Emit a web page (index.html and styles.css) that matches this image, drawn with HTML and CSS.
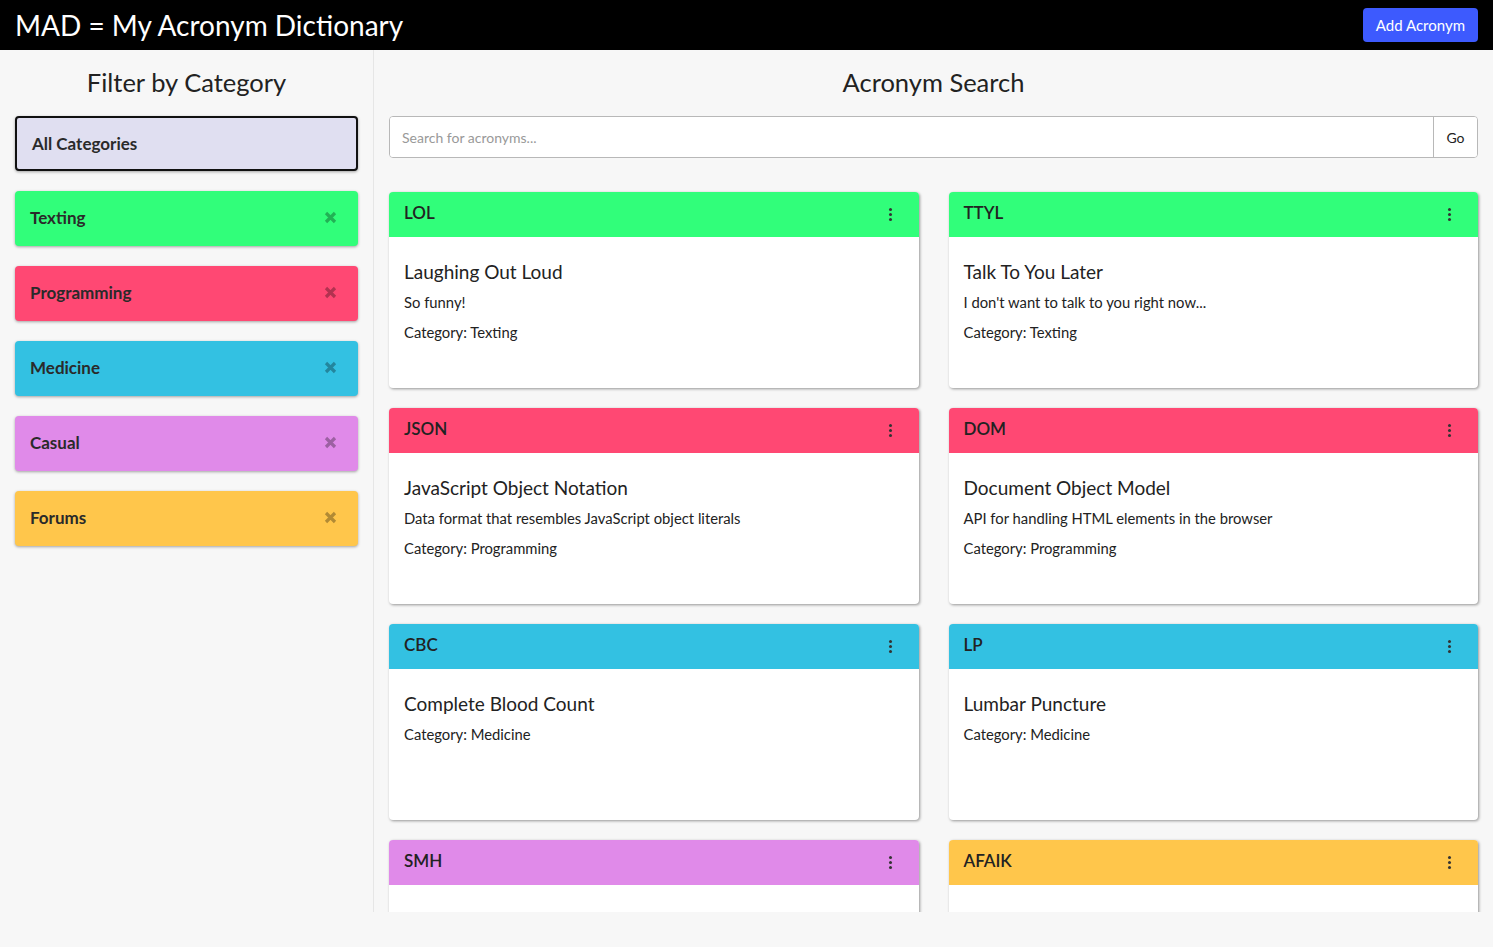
FILE: index.html
```html
<!DOCTYPE html>
<html lang="en">
<head>
<meta charset="utf-8">
<title>MAD = My Acronym Dictionary</title>
<link rel="stylesheet" href="styles.css">
</head>
<body>
<header class="navbar">
  <h1 class="brand">MAD = My Acronym Dictionary</h1>
  <button class="add-btn">Add Acronym</button>
</header>
<div class="layout">
  <aside class="sidebar">
    <h2 class="section-title">Filter by Category</h2>
    <ul class="cat-list">
      <li class="cat cat-all">All Categories</li>
      <li class="cat texting">Texting<svg class="cat-x" viewBox="0 0 13 13" width="13" height="13"><path d="M2 2L11 11M11 2L2 11"/></svg></li>
      <li class="cat programming">Programming<svg class="cat-x" viewBox="0 0 13 13" width="13" height="13"><path d="M2 2L11 11M11 2L2 11"/></svg></li>
      <li class="cat medicine">Medicine<svg class="cat-x" viewBox="0 0 13 13" width="13" height="13"><path d="M2 2L11 11M11 2L2 11"/></svg></li>
      <li class="cat casual">Casual<svg class="cat-x" viewBox="0 0 13 13" width="13" height="13"><path d="M2 2L11 11M11 2L2 11"/></svg></li>
      <li class="cat forums">Forums<svg class="cat-x" viewBox="0 0 13 13" width="13" height="13"><path d="M2 2L11 11M11 2L2 11"/></svg></li>
    </ul>
  </aside>
  <main class="main">
    <h2 class="section-title">Acronym Search</h2>
    <div class="search">
      <input class="search-input" type="text" placeholder="Search for acronyms...">
      <button class="search-go">Go</button>
    </div>
    <div class="grid">
      <div class="card">
        <div class="card-head texting"><span>LOL</span><span class="kebab"><i></i><i></i><i></i></span></div>
        <div class="card-body"><h3>Laughing Out Loud</h3><p>So funny!</p><p>Category: Texting</p></div>
      </div>
      <div class="card">
        <div class="card-head texting"><span>TTYL</span><span class="kebab"><i></i><i></i><i></i></span></div>
        <div class="card-body"><h3>Talk To You Later</h3><p>I don't want to talk to you right now...</p><p>Category: Texting</p></div>
      </div>
      <div class="card">
        <div class="card-head programming"><span>JSON</span><span class="kebab"><i></i><i></i><i></i></span></div>
        <div class="card-body"><h3>JavaScript Object Notation</h3><p>Data format that resembles JavaScript object literals</p><p>Category: Programming</p></div>
      </div>
      <div class="card">
        <div class="card-head programming"><span>DOM</span><span class="kebab"><i></i><i></i><i></i></span></div>
        <div class="card-body"><h3>Document Object Model</h3><p>API for handling HTML elements in the browser</p><p>Category: Programming</p></div>
      </div>
      <div class="card">
        <div class="card-head medicine"><span>CBC</span><span class="kebab"><i></i><i></i><i></i></span></div>
        <div class="card-body"><h3>Complete Blood Count</h3><p>Category: Medicine</p></div>
      </div>
      <div class="card">
        <div class="card-head medicine"><span>LP</span><span class="kebab"><i></i><i></i><i></i></span></div>
        <div class="card-body"><h3>Lumbar Puncture</h3><p>Category: Medicine</p></div>
      </div>
      <div class="card">
        <div class="card-head casual"><span>SMH</span><span class="kebab"><i></i><i></i><i></i></span></div>
        <div class="card-body"></div>
      </div>
      <div class="card">
        <div class="card-head forums"><span>AFAIK</span><span class="kebab"><i></i><i></i><i></i></span></div>
        <div class="card-body"></div>
      </div>
    </div>
  </main>
</div>
</body>
</html>
```
FILE: styles.css
```css
* { box-sizing: border-box; }
html, body { margin: 0; padding: 0; }
body {
  background: #f7f7f7;
  font-family: Lato, "Open Sans", "Liberation Sans", sans-serif;
  color: #222;
  height: 947px;
  overflow: hidden;
}
.navbar {
  height: 50px;
  background: #000;
  display: flex;
  align-items: center;
  justify-content: space-between;
  padding: 0 15px;
}
.brand {
  margin: 0;
  color: #fff;
  font-weight: 400;
  font-size: 28px;
  letter-spacing: 0;
}
.add-btn {
  background: #3d5afe;
  color: #fff;
  border: none;
  border-radius: 4px;
  height: 34px;
  padding: 0 13px;
  font-family: inherit;
  font-size: 15px;
}
.layout {
  display: flex;
  height: 862px;
  overflow: hidden;
}
.sidebar {
  width: 374px;
  flex: 0 0 374px;
  border-right: 1px solid #e6e6e6;
  padding: 0 15px;
}
.section-title {
  margin: 0;
  height: 66px;
  line-height: 64px;
  text-align: center;
  font-weight: 400;
  font-size: 25.5px;
  color: #222;
}
.cat-list {
  list-style: none;
  margin: 0;
  padding: 0;
  display: flex;
  flex-direction: column;
  gap: 20px;
}
.cat {
  height: 55px;
  border-radius: 4px;
  display: flex;
  align-items: center;
  justify-content: space-between;
  padding: 0 21px 2px 15px;
  font-size: 17px;
  font-weight: 700;
  color: #2a2a2a;
  box-shadow: 0 1px 3px rgba(0,0,0,0.35);
}
.cat-all {
  background: #e0dff1;
  border: 2px solid #111;
  padding-bottom: 1px;
}
.cat-x {
  display: block;
  fill: none;
  stroke: rgba(0,0,0,0.3);
  stroke-width: 3.2;
  stroke-linecap: butt;
}
.texting { background: #31fe7a; }
.programming { background: #ff4873; }
.medicine { background: #33c1e2; }
.casual { background: #e08ae9; }
.forums { background: #ffc64b; }
.main {
  flex: 1;
  padding: 0 15px;
  min-width: 0;
}
.search {
  display: flex;
  height: 42px;
  border: 1px solid #b8b8b8;
  border-radius: 4px;
  background: #fff;
  overflow: hidden;
  margin-bottom: 34px;
}
.search-input {
  flex: 1;
  border: none;
  padding: 0 12px;
  font-family: inherit;
  font-size: 14px;
  color: #333;
  outline: none;
}
.search-input::placeholder { color: #999; }
.search-go {
  width: 44px;
  border: none;
  border-left: 1px solid #b8b8b8;
  background: #fff;
  font-family: inherit;
  font-size: 14px;
  color: #222;
}
.grid {
  display: grid;
  grid-template-columns: 1fr 1fr;
  column-gap: 30px;
  row-gap: 20px;
}
.card {
  height: 196px;
  background: #fff;
  border-radius: 4px;
  box-shadow: 1px 1px 3px rgba(0,0,0,0.4);
  overflow: hidden;
}
.card-head {
  height: 45px;
  display: flex;
  align-items: center;
  justify-content: space-between;
  padding: 0 27px 4px 15px;
  font-size: 17px;
  font-weight: 600;
  color: #222;
}
.kebab {
  display: flex;
  flex-direction: column;
  gap: 2px;
  padding-top: 4px;
}
.kebab i {
  display: block;
  width: 3px;
  height: 3px;
  border-radius: 50%;
  background: #333;
}
.card-body {
  padding: 24px 15px 0;
}
.card-body h3 {
  margin: 0 0 9px;
  font-size: 19px;
  line-height: 22px;
  font-weight: 400;
  color: #222;
}
.card-body p {
  margin: 0 0 10px;
  font-size: 14.8px;
  line-height: 20px;
  color: #222;
}
```
